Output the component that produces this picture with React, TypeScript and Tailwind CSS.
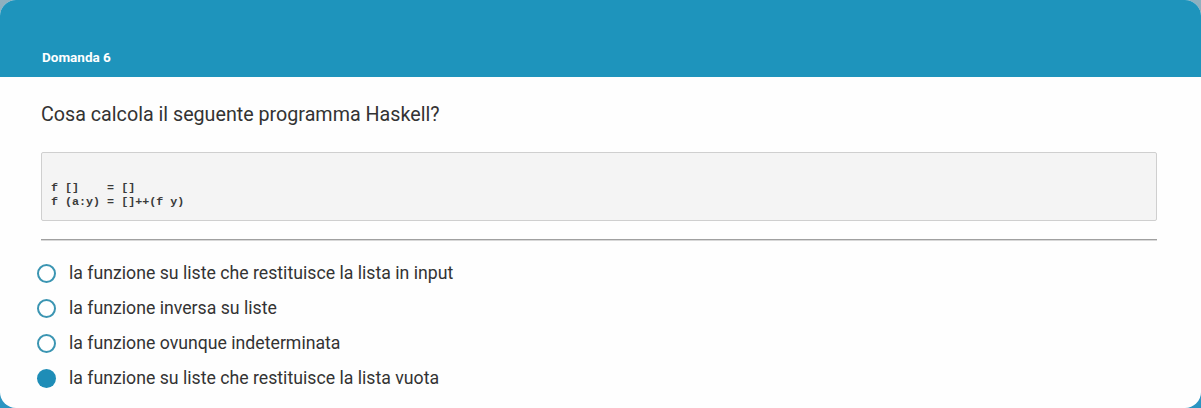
import React from "react";

const options = [
  { label: "la funzione su liste che restituisce la lista in input", checked: false },
  { label: "la funzione inversa su liste", checked: false },
  { label: "la funzione ovunque indeterminata", checked: false },
  { label: "la funzione su liste che restituisce la lista vuota", checked: true },
];

export default function App() {
  return (
    <div className="w-[1201px] h-[408px] bg-gradient-to-b from-[#8fb0bf] via-[#5aa3c4] to-[#2a95c2] overflow-hidden" style={{ fontFamily: "Roboto, 'Liberation Sans', sans-serif" }}>
      <div className="h-full rounded-[16px] overflow-hidden bg-[#fefefe] flex flex-col">
        <div className="h-[77px] bg-[#1e94bc] flex items-end px-[42px] pb-[11px]">
          <span className="text-white font-bold text-[13.5px] leading-[18px]">Domanda 6</span>
        </div>
        <div className="px-[41px] pr-[44px] flex flex-col">
          <div className="mt-[25px] text-[19.7px] leading-[26px] text-[#333]">Cosa calcola il seguente programma Haskell?</div>
          <div className="mt-[24px] h-[69px] bg-[#f4f4f4] border border-[#cfcfcf] rounded-[2px] px-[9px] pt-[29px]">
            <pre className="text-[11.7px] leading-[13.5px] font-bold text-[#3a3a3a]" style={{ fontFamily: "'Liberation Mono', 'DejaVu Sans Mono', monospace" }}>
{`f []    = []
f (a:y) = []++(f y)`}
            </pre>
          </div>
          <div className="mt-[18px] h-[2px] bg-[#a0a0a0] border-b border-[#d8d8d8]" />
          <div className="mt-[22px] flex flex-col gap-[15px]">
            {options.map((o) => (
              <div key={o.label} className="flex items-center h-[20px]">
                {o.checked ? (
                  <span className="w-[19px] h-[19px] rounded-full bg-[#1e8db7] -ml-[4px] shrink-0" />
                ) : (
                  <span className="w-[19px] h-[19px] rounded-full border-2 border-[#3b95b2] -ml-[4px] bg-white shrink-0" />
                )}
                <span className="ml-[13px] text-[17.7px] text-[#333] whitespace-nowrap">{o.label}</span>
              </div>
            ))}
          </div>
        </div>
      </div>
    </div>
  );
}
